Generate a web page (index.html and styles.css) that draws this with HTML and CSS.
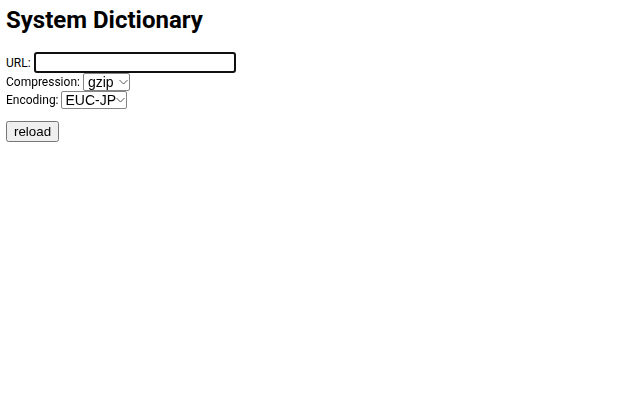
FILE: index.html
```html
<!DOCTYPE html>
<html>
<head>
<meta charset="utf-8">
<link rel="stylesheet" href="styles.css">
</head>
<body>
<h1 class="title">System Dictionary</h1>
<form class="form">
  <div class="row"><label for="url">URL:</label> <input id="url" class="url" type="text" autofocus></div>
  <div class="row"><label for="comp">Compression:</label> <span class="selwrap"><select id="comp" class="sel sel-comp"><option>gzip</option><option>none</option></select><svg class="chev" width="9" height="6" viewBox="0 0 9 6"><path d="M0.5 1 L4.5 5 L8.5 1" fill="none" stroke="#444" stroke-width="0.9"/></svg></span></div>
  <div class="row"><label for="enc">Encoding:</label> <span class="selwrap"><select id="enc" class="sel sel-enc"><option>EUC-JP</option><option>UTF-8</option></select><svg class="chev" width="9" height="6" viewBox="0 0 9 6"><path d="M0.5 1 L4.5 5 L8.5 1" fill="none" stroke="#444" stroke-width="0.9"/></svg></span></div>
  <p class="actions"><button type="button" class="btn">reload</button></p>
</form>
</body>
</html>
```
FILE: styles.css
```css
body {
  margin: 6px;
  font-family: Roboto, "Liberation Sans", sans-serif;
  font-size: 12px;
  color: #000;
  background: #fff;
}
.title {
  font-size: 24px;
  font-weight: bold;
  margin: 0 0 18px 0;
}
.form { margin: 0; }
.row {
  display: flex;
  align-items: center;
  gap: 3px;
  margin: 0;
}
.url {
  box-sizing: border-box;
  width: 202px;
  height: 21px;
}
.selwrap {
  position: relative;
  display: inline-block;
  height: 18px;
}
.sel {
  -webkit-appearance: none;
  appearance: none;
  box-sizing: border-box;
  height: 18px;
  margin: 0;
  padding: 0 0 0 4px;
  border: 1px solid #858585;
  border-radius: 2px;
  background: #fff;
  color: #000;
  font-family: "Liberation Sans", Arial, sans-serif;
  font-size: 14px;
  line-height: 16px;
}
.sel-comp { width: 47px; }
.sel-enc { width: 66px; margin-left: -1px; }
.chev {
  position: absolute;
  right: 2px;
  top: 6px;
  pointer-events: none;
}
.actions { margin: 12px 0 0 0; }
```
